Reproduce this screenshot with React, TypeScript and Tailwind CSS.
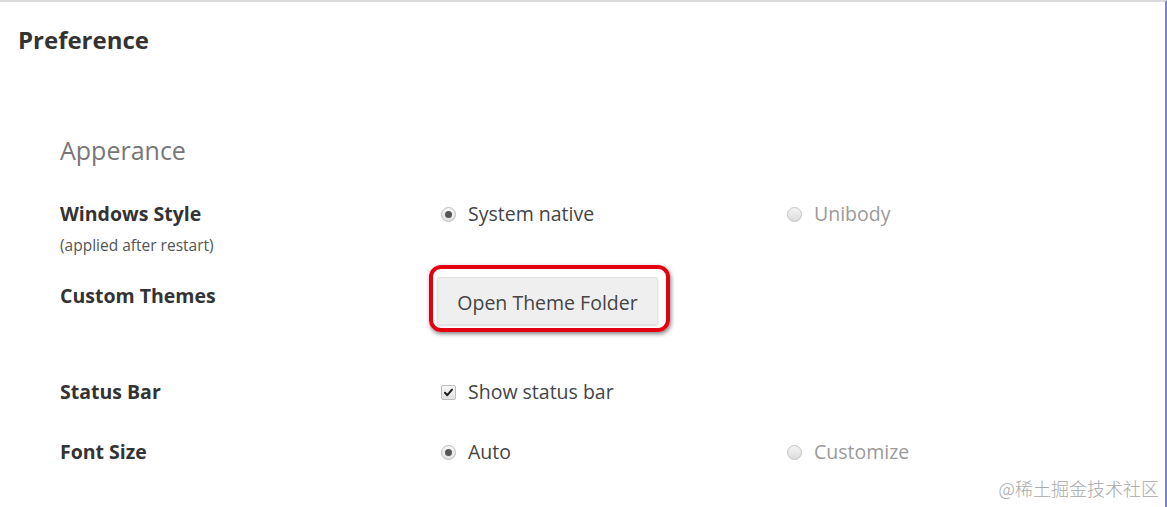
import React from "react";

function Radio({ checked, disabled }: { checked?: boolean; disabled?: boolean }) {
  return (
    <span
      className={
        "flex h-[15px] w-[15px] shrink-0 items-center justify-center rounded-full border " +
        (disabled
          ? "border-[#c4c4c4] bg-gradient-to-b from-[#f4f4f4] to-[#dcdcdc]"
          : "border-[#bdbdbd] bg-gradient-to-b from-[#f7f7f7] to-[#e2e2e2]")
      }
    >
      {checked && <span className="h-[7px] w-[7px] rounded-full bg-[#555]" />}
    </span>
  );
}

function Checkbox() {
  return (
    <span className="flex h-[15px] w-[15px] shrink-0 items-center justify-center rounded-[2px] border border-[#bdbdbd] bg-gradient-to-b from-[#f7f7f7] to-[#e2e2e2]">
      <svg width="11" height="11" viewBox="0 0 11 11">
        <path d="M2 5.8 L4.3 8.2 L9 2.6" fill="none" stroke="#222" strokeWidth="2" strokeLinecap="round" strokeLinejoin="round" />
      </svg>
    </span>
  );
}

function Option({ label, checked, disabled, kind = "radio" }: { label: string; checked?: boolean; disabled?: boolean; kind?: "radio" | "check" }) {
  return (
    <div className="flex items-center gap-[12px] h-[24px]">
      {kind === "radio" ? <Radio checked={checked} disabled={disabled} /> : <Checkbox />}
      <span className={"text-[19.5px] leading-[24px] " + (disabled ? "text-[#9a9a9a]" : "text-[#444]")}>{label}</span>
    </div>
  );
}

export default function App() {
  return (
    <div
      className="relative h-[507px] w-[1167px] overflow-hidden border-t-2 border-r-2 border-t-[#dadada] border-r-[#7b7fe0] bg-white"
      style={{ fontFamily: '"Open Sans", "Noto Sans", sans-serif' }}
    >
      <div className="pl-[18px] pt-[24px]">
        <h1 className="text-[24px] font-bold leading-[28px] text-[#333]">Preference</h1>
      </div>
      <div className="pl-[60px]">
        <h2 className="mt-[80px] text-[25px] leading-[32px] text-[#777]">Apperance</h2>

        <div className="mt-[36px] flex">
          <div className="w-[381px]">
            <div className="text-[19.5px] font-bold leading-[24px] text-[#333]">Windows Style</div>
            <div className="mt-[9px] text-[15.5px] leading-[20px] text-[#555]">(applied after restart)</div>
          </div>
          <div className="w-[346px]">
            <Option label="System native" checked />
          </div>
          <div>
            <Option label="Unibody" disabled />
          </div>
        </div>

        <div className="mt-[10px] flex">
          <div className="w-[381px] pt-[19px]">
            <div className="text-[19.5px] font-bold leading-[24px] text-[#333]">Custom Themes</div>
          </div>
          <div className="-ml-[12px] rounded-[12px] border-4 border-[#e30010] pb-[3px] pl-[4px] pr-[8px] pt-[8px] shadow-[1px_2px_4px_rgba(0,0,0,0.5)]">
            <button className="flex h-[48px] w-[221px] items-center justify-center rounded-[2px] border border-[#e2e2e2] bg-[#efefef] pt-[3px] text-[19.5px] text-[#444] shadow-[0_1px_2px_rgba(0,0,0,0.15)]">
              Open Theme Folder
            </button>
          </div>
        </div>

        <div className="mt-[48px] flex">
          <div className="w-[381px] text-[19.5px] font-bold leading-[24px] text-[#333]">Status Bar</div>
          <Option label="Show status bar" kind="check" />
        </div>

        <div className="mt-[36px] flex">
          <div className="w-[381px] text-[19.5px] font-bold leading-[24px] text-[#333]">Font Size</div>
          <div className="w-[346px]">
            <Option label="Auto" checked />
          </div>
          <Option label="Customize" disabled />
        </div>
      </div>

      <div
        className="absolute bottom-[7px] right-[6px] text-[18px] leading-[24px] text-[#a8a8a8]"
        style={{ fontFamily: '"Noto Sans CJK SC", sans-serif', fontWeight: 300 }}
      >
        @稀土掘金技术社区
      </div>
    </div>
  );
}
